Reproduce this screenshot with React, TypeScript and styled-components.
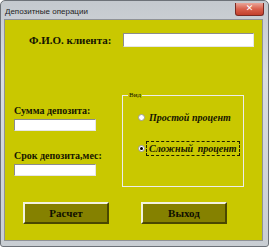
import React from "react";
import styled, { createGlobalStyle } from "styled-components";

const Global = createGlobalStyle`
  html, body { margin: 0; padding: 0; background: #ffffff; }
  body { width: 269px; height: 247px; overflow: hidden; }
`;

const Frame = styled.div`
  width: 269px;
  height: 247px;
  box-sizing: border-box;
  display: flex;
  flex-direction: column;
  background: linear-gradient(180deg, #c4c9ce 0%, #d9dde1 30%, #c9ced3 100%);
  border: 1px solid #6d7278;
  border-radius: 5px 5px 3px 3px;
  padding: 0 5px 5px 3px;
`;

const TitleBar = styled.div`
  height: 18px;
  display: flex;
  align-items: center;
  justify-content: space-between;
  flex-shrink: 0;
`;

const Title = styled.span`
  font-family: "Liberation Sans", Arial, sans-serif;
  font-size: 8px;
  color: #1e1e1e;
  padding-left: 1px;
  margin-top: 2px;
`;

const CloseButton = styled.div`
  width: 27px;
  height: 12px;
  margin-top: -2px;
  margin-right: -1px;
  border-radius: 0 0 3px 3px;
  border: 1px solid #7a2a22;
  border-top: none;
  background: linear-gradient(180deg, #e9a598 0%, #d9604c 50%, #c2402c 100%);
  display: flex;
  align-items: center;
  justify-content: center;
  color: #ffffff;
  font-family: "DejaVu Sans", sans-serif;
  font-weight: bold;
  font-size: 9px;
  line-height: 1;
`;

const Client = styled.div`
  flex: 1;
  background: #c9c800;
  border: 1px solid #8f9296;
  display: flex;
  flex-direction: column;
  font-family: "Liberation Serif", "Times New Roman", serif;
  color: #151500;
`;

const TopRow = styled.div`
  display: flex;
  align-items: center;
  padding: 13px 0 0 24px;
`;

const BigLabel = styled.span`
  font-weight: bold;
  font-size: 11px;
  width: 94px;
`;

const TextBox = styled.div<{ $w: number; $h: number }>`
  width: ${(p) => p.$w}px;
  height: ${(p) => p.$h}px;
  box-sizing: border-box;
  background: #ffffff;
  border-top: 1px solid #8c8c8c;
  border-left: 1px solid #8c8c8c;
  border-bottom: 1px solid #e6e6e6;
  border-right: 1px solid #e6e6e6;
`;

const MiddleRow = styled.div`
  display: flex;
  margin-top: 44px;
`;

const LeftColumn = styled.div`
  width: 117px;
  padding: 14px 0 0 9px;
  box-sizing: border-box;
  display: flex;
  flex-direction: column;
  align-items: flex-start;
`;

const SmallLabel = styled.span<{ $gap?: number }>`
  font-weight: bold;
  font-size: 10px;
  margin-top: ${(p) => p.$gap ?? 0}px;
  margin-bottom: 3px;
  white-space: nowrap;
`;

const Group = styled.fieldset`
  margin: 0;
  width: 122px;
  height: 96px;
  box-sizing: border-box;
  border: 1px solid #ececec;
  padding: 0 0 0 15px;
  display: flex;
  flex-direction: column;
`;

const Legend = styled.legend`
  font-size: 7px;
  padding: 0 1px;
  margin-left: -10px;
  line-height: 8px;
`;

const RadioRow = styled.div<{ $top: number }>`
  display: flex;
  align-items: center;
  margin-top: ${(p) => p.$top}px;
`;

const RadioDot = styled.span<{ $on?: boolean }>`
  width: 7px;
  height: 7px;
  box-sizing: border-box;
  border-radius: 50%;
  background: #ffffff;
  border: 1px solid #9a9a9a;
  display: flex;
  align-items: center;
  justify-content: center;
  margin-right: 1px;
  &::after {
    content: "";
    width: 3px;
    height: 3px;
    border-radius: 50%;
    background: ${(p) => (p.$on ? "#000000" : "transparent")};
  }
`;

const RadioText = styled.span<{ $focus?: boolean }>`
  font-weight: bold;
  font-style: italic;
  font-size: 10px;
  padding: 1px 2px;
  border: 1px dashed ${(p) => (p.$focus ? "#202000" : "transparent")};
  white-space: nowrap;
  word-spacing: ${(p) => (p.$focus ? "2px" : "0")};
`;

const ButtonRow = styled.div`
  display: flex;
  gap: 32px;
  padding: 15px 0 0 18px;
`;

const Button = styled.div`
  width: 86px;
  height: 22px;
  box-sizing: border-box;
  background: #858100;
  border-top: 2px solid #f2f2e0;
  border-left: 2px solid #f2f2e0;
  border-bottom: 2px solid #4a4800;
  border-right: 2px solid #4a4800;
  display: flex;
  align-items: center;
  justify-content: center;
  font-weight: bold;
  font-size: 11px;
  color: #101000;
`;

export default function App() {
  return (
    <>
      <Global />
      <Frame>
        <TitleBar>
          <Title>Депозитные операции</Title>
          <CloseButton>✕</CloseButton>
        </TitleBar>
        <Client>
          <TopRow>
            <BigLabel>Ф.И.О. клиента:</BigLabel>
            <TextBox $w={131} $h={14} />
          </TopRow>
          <MiddleRow>
            <LeftColumn>
              <SmallLabel>Сумма депозита:</SmallLabel>
              <TextBox $w={82} $h={12} />
              <SmallLabel $gap={19}>Срок депозита,мес:</SmallLabel>
              <TextBox $w={82} $h={12} />
            </LeftColumn>
            <Group>
              <Legend>Вид</Legend>
              <RadioRow $top={11}>
                <RadioDot />
                <RadioText>Простой процент</RadioText>
              </RadioRow>
              <RadioRow $top={16}>
                <RadioDot $on />
                <RadioText $focus>Сложный процент</RadioText>
              </RadioRow>
            </Group>
          </MiddleRow>
          <ButtonRow>
            <Button>Расчет</Button>
            <Button>Выход</Button>
          </ButtonRow>
        </Client>
      </Frame>
    </>
  );
}
